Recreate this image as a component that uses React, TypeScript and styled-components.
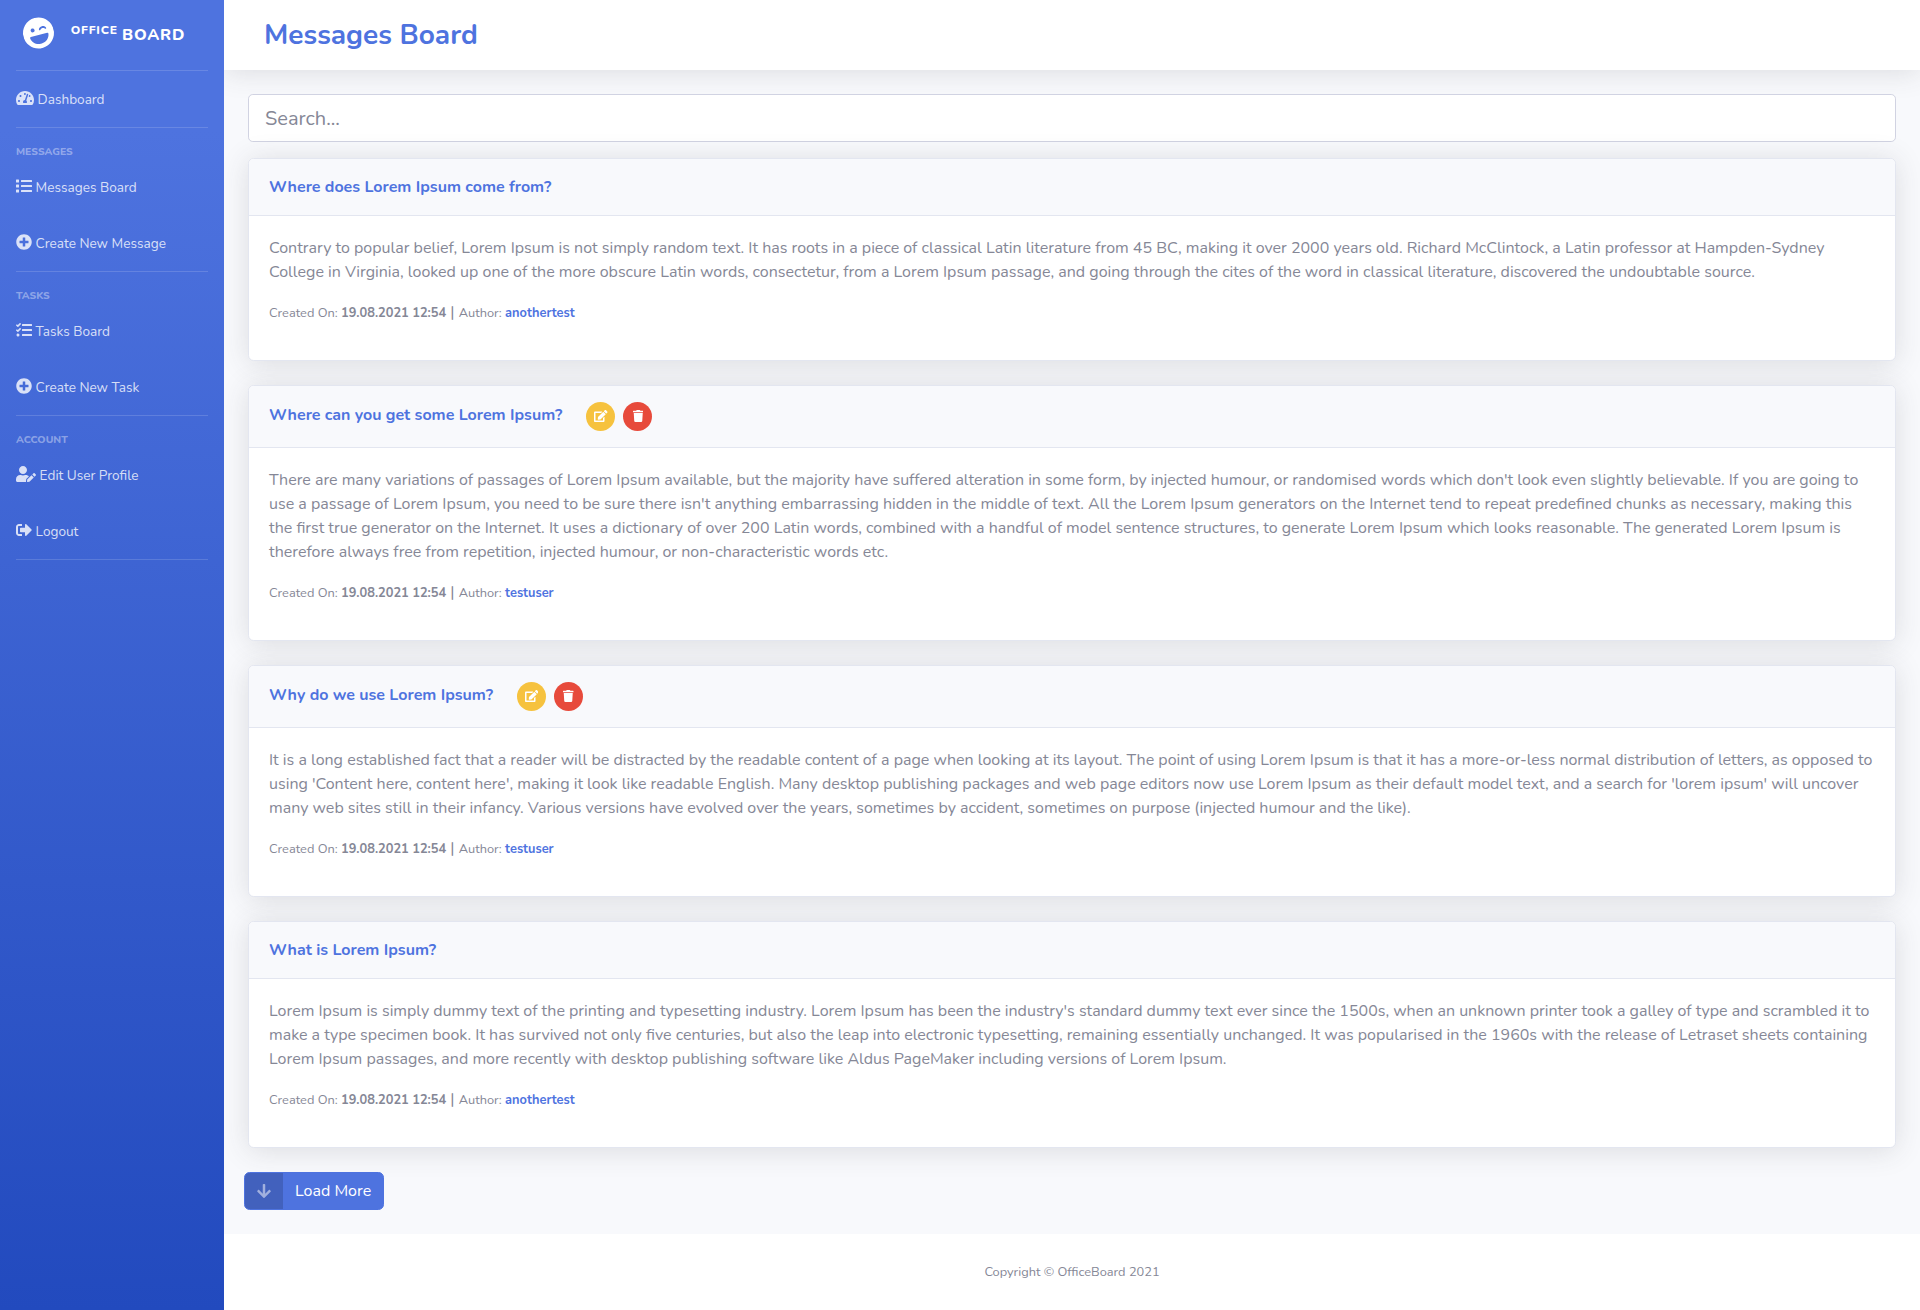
import React from 'react';
import styled, { createGlobalStyle } from 'styled-components';
import {
  FaArrowDown,
  FaEdit,
  FaLaughWink,
  FaList,
  FaPlusCircle,
  FaSignOutAlt,
  FaTachometerAlt,
  FaTasks,
  FaTrash,
  FaUserEdit,
} from 'react-icons/fa';
import type { IconType } from 'react-icons';

const color = {
  primary: '#4e73df',
  primaryDark: '#224abe',
  warning: '#f6c23e',
  danger: '#e74a3b',
  text: '#858796',
  surface: '#f8f9fc',
  border: '#e3e6f0',
  inputBorder: '#d1d3e2',
};

const shadow = '0 0.15rem 1.75rem 0 rgba(58, 59, 69, 0.15)';

const GlobalStyle = createGlobalStyle`
  *, *::before, *::after { box-sizing: border-box; }
  body {
    margin: 0;
    font-family: Nunito, Lato, "Open Sans", sans-serif;
    font-size: 16px;
    line-height: 1.5;
    color: ${color.text};
    background: #fff;
  }
  a { color: inherit; text-decoration: none; }
`;

const Page = styled.div`
  display: flex;
  min-height: 1310px;
`;

const Sidebar = styled.nav`
  flex: 0 0 224px;
  background: linear-gradient(180deg, ${color.primary} 10%, ${color.primaryDark} 100%);
`;

const Brand = styled.a`
  display: flex;
  align-items: center;
  justify-content: center;
  height: 70px;
  padding: 24px 16px;
  color: #fff;
  font-weight: 800;
  letter-spacing: 0.05rem;
  text-transform: uppercase;
  white-space: nowrap;
`;

const BrandIcon = styled(FaLaughWink)`
  flex: none;
  width: 31px;
  height: 32px;
  margin-top: -4px;
  transform: rotate(-15deg);
`;

const BrandText = styled.div`
  margin: 0 16px;

  sup {
    position: relative;
    top: -0.5em;
    left: 1px;
    font-size: 75%;
    line-height: 0;
    vertical-align: baseline;
  }
`;

const Divider = styled.hr`
  height: 1px;
  margin: 0 16px;
  border: 0;
  background: rgba(255, 255, 255, 0.15);
`;

const NavHeading = styled.div`
  height: 31px;
  padding: 16px 16px 0;
  color: rgba(255, 255, 255, 0.4);
  font-size: 0.65rem;
  font-weight: 800;
  line-height: 1.5;
  text-transform: uppercase;
`;

const NavLink = styled.a<{ $iconWidth: number }>`
  display: block;
  height: 56px;
  padding: 16px;
  color: rgba(255, 255, 255, 0.8);

  svg {
    width: ${(p) => p.$iconWidth}px;
    height: 16px;
    vertical-align: -2px;
  }

  span {
    margin-left: 3.6px;
    font-size: 0.85rem;
  }
`;

const Main = styled.div`
  flex: 1;
  min-width: 0;
  overflow: hidden;
  background: ${color.surface};
`;

const Topbar = styled.header`
  display: flex;
  align-items: center;
  height: 70px;
  padding: 2px 40px 0;
  background: #fff;
  box-shadow: ${shadow};
`;

const PageTitle = styled.h1`
  margin: 0;
  color: ${color.primary};
  font-size: 1.75rem;
  font-weight: 700;
  line-height: 1.2;
`;

const Content = styled.main`
  padding: 24px 24px 0;
`;

const SearchInput = styled.input`
  display: block;
  width: 100%;
  height: 48px;
  margin-bottom: 16px;
  padding: 8px 16px;
  border: 1px solid ${color.inputBorder};
  border-radius: 0.3rem;
  background: #fff;
  font: inherit;
  font-size: 1.25rem;

  &::placeholder { color: ${color.text}; opacity: 1; }
`;

const Card = styled.article`
  margin-bottom: 24px;
  border: 1px solid ${color.border};
  border-radius: 0.35rem;
  background: #fff;
  box-shadow: ${shadow};
`;

const CardHeader = styled.div<{ $tall: boolean }>`
  display: flex;
  align-items: center;
  gap: 24px;
  height: ${(p) => (p.$tall ? 62 : 57)}px;
  padding: 0 20px;
  border-bottom: 1px solid ${color.border};
  border-radius: 0.3rem 0.3rem 0 0;
  background: ${color.surface};
`;

const CardTitle = styled.h2<{ $raised: boolean }>`
  margin: 0;
  padding-top: ${(p) => (p.$raised ? 0 : 2)}px;
  padding-bottom: ${(p) => (p.$raised ? 1 : 0)}px;
  color: ${color.primary};
  font-size: 1rem;
  font-weight: 700;
  line-height: 1.2;
`;

const CardActions = styled.div`
  display: flex;
  gap: 8px;
`;

const CircleButton = styled.button<{ $bg: string; $iconWidth: number }>`
  display: inline-flex;
  align-items: center;
  justify-content: center;
  width: 29px;
  height: 29px;
  padding: 0 0 1px;
  border: 0;
  border-radius: 50%;
  background: ${(p) => p.$bg};
  color: #fff;

  svg {
    width: ${(p) => p.$iconWidth}px;
    height: 12px;
  }
`;

const CardBody = styled.div`
  padding: 20px;

  p { margin: 0 0 16px; }
`;

const Meta = styled.p`
  small { font-size: 80%; }
  b { font-weight: 700; }
  a { color: ${color.primary}; font-weight: 700; }
`;

const LoadMoreButton = styled.button`
  display: inline-flex;
  align-items: stretch;
  height: 38px;
  margin: 0 0 24px -4px;
  padding: 0;
  overflow: hidden;
  border: 1px solid ${color.primary};
  border-radius: 0.35rem;
  background: ${color.primary};
  color: #fff;
  font: inherit;
`;

const LoadMoreIcon = styled.span`
  display: flex;
  align-items: center;
  padding: 0 12px;
  background: rgba(0, 0, 0, 0.15);
  color: rgba(255, 255, 255, 0.5);

  svg {
    height: 16px;
    width: 14px;
  }
`;

const LoadMoreLabel = styled.span`
  padding: 6px 12px;
`;

const Footer = styled.footer`
  padding: 32px 0;
  background: #fff;
  font-size: 0.8rem;
  line-height: 12px;
  text-align: center;
`;

type NavItem = { icon: IconType; iconWidth: number; label: string };
type NavGroup = { heading?: string; items: NavItem[] };

const navGroups: NavGroup[] = [
  { items: [{ icon: FaTachometerAlt, iconWidth: 18, label: 'Dashboard' }] },
  {
    heading: 'Messages',
    items: [
      { icon: FaList, iconWidth: 16, label: 'Messages Board' },
      { icon: FaPlusCircle, iconWidth: 16, label: 'Create New Message' },
    ],
  },
  {
    heading: 'Tasks',
    items: [
      { icon: FaTasks, iconWidth: 16, label: 'Tasks Board' },
      { icon: FaPlusCircle, iconWidth: 16, label: 'Create New Task' },
    ],
  },
  {
    heading: 'Account',
    items: [
      { icon: FaUserEdit, iconWidth: 20, label: 'Edit User Profile' },
      { icon: FaSignOutAlt, iconWidth: 16, label: 'Logout' },
    ],
  },
];

type Message = { title: string; text: string; created: string; author: string; editable: boolean };

const messages: Message[] = [
  {
    title: 'Where does Lorem Ipsum come from?',
    text: 'Contrary to popular belief, Lorem Ipsum is not simply random text. It has roots in a piece of classical Latin literature from 45 BC, making it over 2000 years old. Richard McClintock, a Latin professor at Hampden-Sydney College in Virginia, looked up one of the more obscure Latin words, consectetur, from a Lorem Ipsum passage, and going through the cites of the word in classical literature, discovered the undoubtable source.',
    created: '19.08.2021 12:54',
    author: 'anothertest',
    editable: false,
  },
  {
    title: 'Where can you get some Lorem Ipsum?',
    text: "There are many variations of passages of Lorem Ipsum available, but the majority have suffered alteration in some form, by injected humour, or randomised words which don't look even slightly believable. If you are going to use a passage of Lorem Ipsum, you need to be sure there isn't anything embarrassing hidden in the middle of text. All the Lorem Ipsum generators on the Internet tend to repeat predefined chunks as necessary, making this the first true generator on the Internet. It uses a dictionary of over 200 Latin words, combined with a handful of model sentence structures, to generate Lorem Ipsum which looks reasonable. The generated Lorem Ipsum is therefore always free from repetition, injected humour, or non-characteristic words etc.",
    created: '19.08.2021 12:54',
    author: 'testuser',
    editable: true,
  },
  {
    title: 'Why do we use Lorem Ipsum?',
    text: "It is a long established fact that a reader will be distracted by the readable content of a page when looking at its layout. The point of using Lorem Ipsum is that it has a more-or-less normal distribution of letters, as opposed to using 'Content here, content here', making it look like readable English. Many desktop publishing packages and web page editors now use Lorem Ipsum as their default model text, and a search for 'lorem ipsum' will uncover many web sites still in their infancy. Various versions have evolved over the years, sometimes by accident, sometimes on purpose (injected humour and the like).",
    created: '19.08.2021 12:54',
    author: 'testuser',
    editable: true,
  },
  {
    title: 'What is Lorem Ipsum?',
    text: "Lorem Ipsum is simply dummy text of the printing and typesetting industry. Lorem Ipsum has been the industry's standard dummy text ever since the 1500s, when an unknown printer took a galley of type and scrambled it to make a type specimen book. It has survived not only five centuries, but also the leap into electronic typesetting, remaining essentially unchanged. It was popularised in the 1960s with the release of Letraset sheets containing Lorem Ipsum passages, and more recently with desktop publishing software like Aldus PageMaker including versions of Lorem Ipsum.",
    created: '19.08.2021 12:54',
    author: 'anothertest',
    editable: false,
  },
];

function MessageCard({ message }: { message: Message }) {
  return (
    <Card>
      <CardHeader $tall={message.editable}>
        <CardTitle $raised={message.editable}>{message.title}</CardTitle>
        {message.editable && (
          <CardActions>
            <CircleButton $bg={color.warning} $iconWidth={13.5}>
              <FaEdit />
            </CircleButton>
            <CircleButton $bg={color.danger} $iconWidth={10.5}>
              <FaTrash />
            </CircleButton>
          </CardActions>
        )}
      </CardHeader>
      <CardBody>
        <p>{message.text}</p>
        <Meta>
          <small>
            Created On: <b>{message.created}</b>
          </small>{' '}
          |{' '}
          <small>
            Author: <a href="#">{message.author}</a>
          </small>
        </Meta>
      </CardBody>
    </Card>
  );
}

export default function App() {
  return (
    <>
      <GlobalStyle />
      <Page>
        <Sidebar>
          <Brand href="#">
            <BrandIcon />
            <BrandText>
              <sup>Office</sup> Board
            </BrandText>
          </Brand>
          <Divider />
          {navGroups.map((group, index) => (
            <React.Fragment key={index}>
              {group.heading && <NavHeading>{group.heading}</NavHeading>}
              {group.items.map(({ icon: Icon, iconWidth, label }) => (
                <NavLink href="#" key={label} $iconWidth={iconWidth}>
                  <Icon />
                  <span>{label}</span>
                </NavLink>
              ))}
              <Divider />
            </React.Fragment>
          ))}
        </Sidebar>
        <Main>
          <Topbar>
            <PageTitle>Messages Board</PageTitle>
          </Topbar>
          <Content>
            <SearchInput placeholder="Search..." />
            {messages.map((message) => (
              <MessageCard key={message.title} message={message} />
            ))}
            <LoadMoreButton>
              <LoadMoreIcon>
                <FaArrowDown />
              </LoadMoreIcon>
              <LoadMoreLabel>Load More</LoadMoreLabel>
            </LoadMoreButton>
          </Content>
          <Footer>Copyright © OfficeBoard 2021</Footer>
        </Main>
      </Page>
    </>
  );
}
